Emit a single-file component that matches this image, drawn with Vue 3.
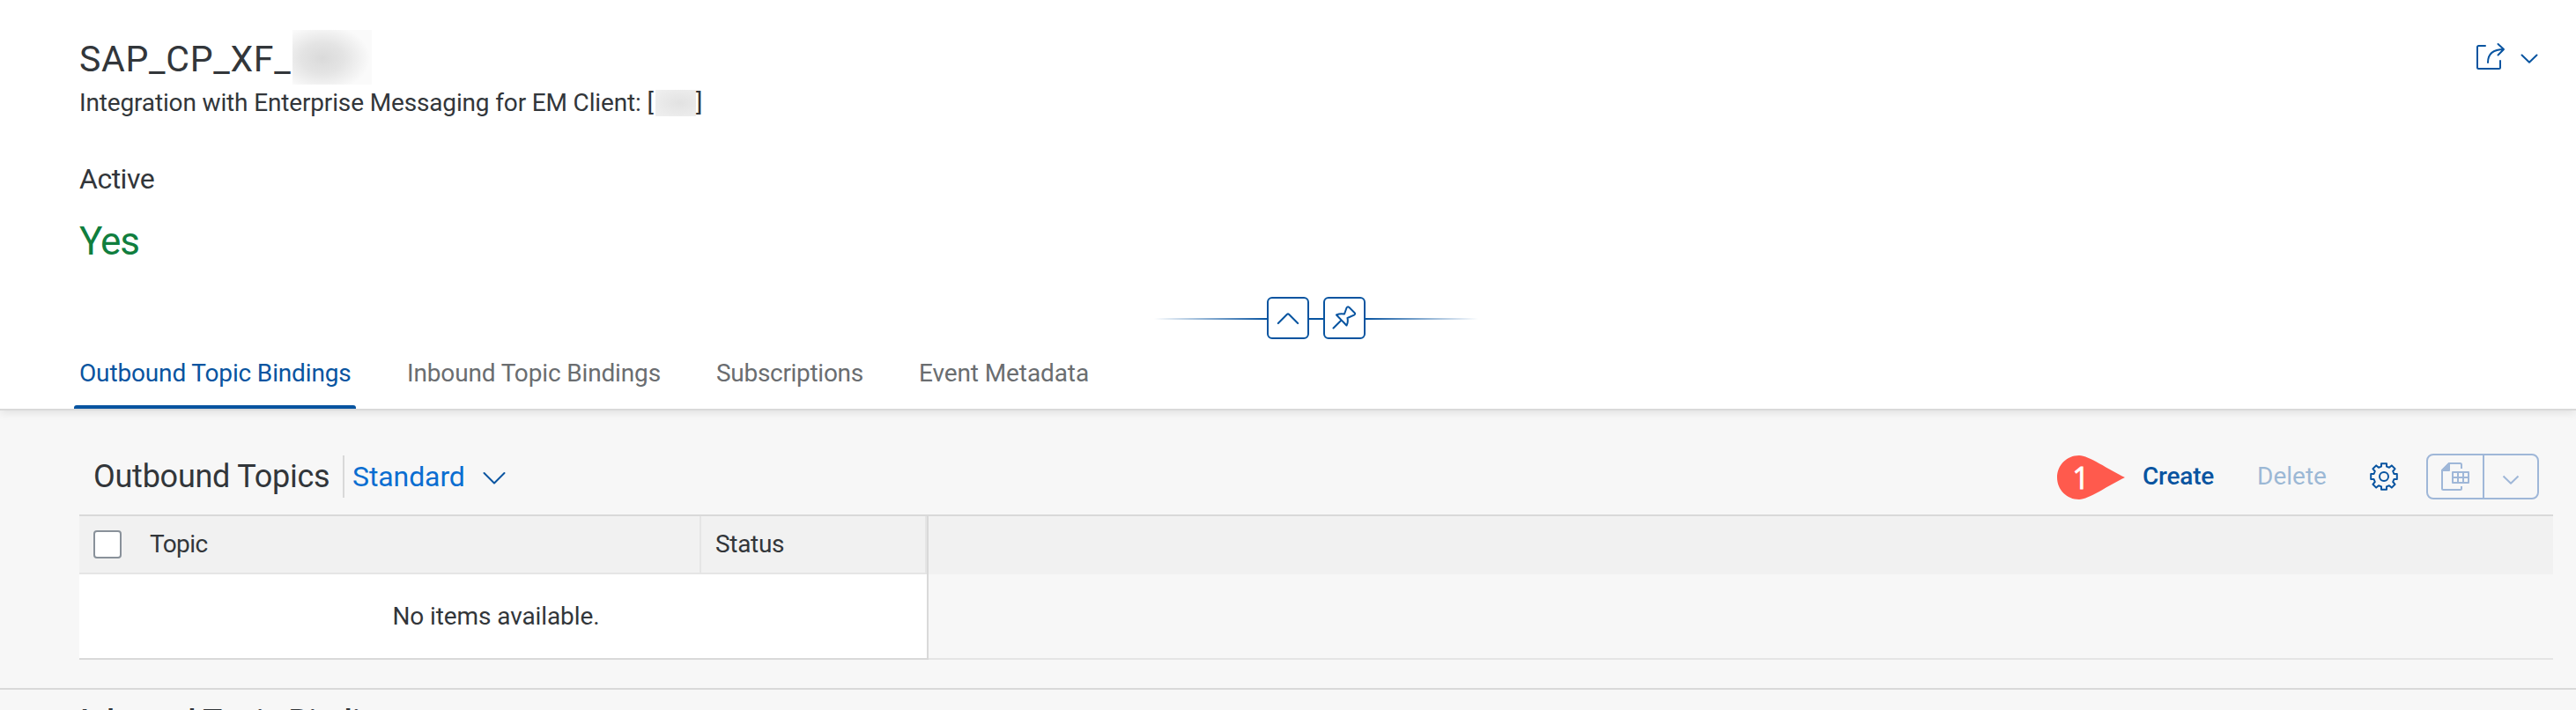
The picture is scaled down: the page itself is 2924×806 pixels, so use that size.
<script setup>
const tabs = [
  { label: 'Outbound Topic Bindings', cls: 'tab-outbound', active: true },
  { label: 'Inbound Topic Bindings', cls: 'tab-inbound' },
  { label: 'Subscriptions', cls: 'tab-subs' },
  { label: 'Event Metadata', cls: 'tab-meta' },
]
</script>

<template>
  <div class="page">
    <header class="head">
      <div class="head-top">
        <div class="titles">
          <h1 class="title"><span class="t-title">SAP_CP_XF_</span><span class="smudge-lg"></span></h1>
          <p class="subtitle"><span class="t-sub">Integration with Enterprise Messaging for EM Client: [</span><span class="smudge-sm"></span><span>]</span></p>
        </div>
        <div class="share">
          <svg class="share-icon" width="34" height="34" viewBox="0 0 34 34">
            <path d="M11 4H3.500Q2 4 2 5.500V28.500Q2 30 3.500 30H26.500Q28 30 28 28.500V21" />
            <path d="M14 23C14 13 20 8 32 8M25.500 2L32 8L25.500 14.500" />
          </svg>
          <svg class="share-arrow" width="20" height="12" viewBox="0 0 20 12"><path d="M1.500 1.500L10 9.800L18.500 1.500" /></svg>
        </div>
      </div>
      <div class="facet">
        <div class="facet-label">Active</div>
        <div class="facet-value">Yes</div>
      </div>
      <div class="anchor">
        <i class="line line-left"></i>
        <button class="sq">
          <svg width="44" height="44" viewBox="0 0 44 44"><path d="M10.800 28L21 17.800Q22 17 23 17.800L33.200 28" /></svg>
        </button>
        <i class="line line-mid"></i>
        <button class="sq">
          <svg width="44" height="44" viewBox="0 0 44 44"><path d="M9.500 33.500L18 25M13 18.500Q17 16.500 22 17.500L24.500 10.500Q25.500 8.500 27.500 10L33.500 16Q35 17.500 33 18.700L25.500 22Q26.500 27 24.500 30.500Z" /></svg>
        </button>
        <i class="line line-right"></i>
      </div>
      <nav class="tabs">
        <a v-for="t in tabs" :key="t.label" :class="['tab', t.cls, { active: t.active }]">{{ t.label }}</a>
      </nav>
    </header>

    <section class="section">
      <div class="toolbar">
        <h2 class="tb-title">Outbound Topics</h2>
        <i class="sep"></i>
        <span class="variant">Standard</span>
        <svg class="variant-arrow" width="26" height="16" viewBox="0 0 26 16"><path d="M1.500 2L13 13.500L24.500 2" /></svg>
        <span class="grow"></span>
        <span class="marker">
          <svg width="78" height="50" viewBox="0 0 78 50"><path d="M25 0C11 0 0 11 0 25S11 50 25 50C36 50 58 34 77 25C58 16 36 0 25 0Z" /></svg>
          <b>1</b>
        </span>
        <a class="btn create">Create</a>
        <a class="btn delete">Delete</a>
        <svg class="gear" width="32" height="32" viewBox="0 0 32 32">
          <path d="M13 1.200H19V4.600L22 5.800L24.800 3.400L28.600 7.200L26.200 10L27.400 13H30.800V19H27.400L26.200 22L28.600 24.800L24.800 28.600L22 26.200L19 27.400V30.800H13V27.400L10 26.200L7.200 28.600L3.400 24.800L5.800 22L4.600 19H1.200V13H4.600L5.800 10L3.400 7.200L7.200 3.400L10 5.800L13 4.600Z" />
          <circle cx="16" cy="16" r="5" />
        </svg>
        <div class="split">
          <span class="split-main">
            <svg width="32" height="32" viewBox="0 0 32 32">
              <path d="M23 7V2.500Q23 1 21.500 1H9L1 9V29.500Q1 31 2.500 31H21.500Q23 31 23 29.500V27" />
              <path class="fill" d="M9 1V9H1Z" />
              <path d="M13 11H31V23H13ZM13 17H31M19 11V23M25 11V23" />
            </svg>
          </span>
          <span class="split-menu">
            <svg width="20" height="12" viewBox="0 0 20 12"><path d="M1.500 1.500L10 9.800L18.500 1.500" /></svg>
          </span>
        </div>
      </div>

      <div class="table">
        <div class="thead">
          <div class="th th-topic"><i class="check"></i><span class="th-text">Topic</span></div>
          <div class="th th-status"><span class="th-text">Status</span></div>
          <div class="th-rest"></div>
        </div>
        <div class="tbody">
          <div class="empty">No items available.</div>
          <div class="rest"></div>
        </div>
      </div>
    </section>

    <section class="next"><h2>Inbound Topic Bindings</h2></section>
  </div>
</template>

<style>
body { margin: 0; }
</style>

<style scoped>
.page {
  width: 2924px; height: 806px; overflow: hidden;
  background: #f7f7f7; color: #32363a;
  font-family: Roboto, "Liberation Sans", sans-serif; font-size: 28px;
}
h1, h2, p { margin: 0; font-weight: 400; }
svg { display: block; fill: none; stroke: #0854a0; stroke-width: 2; stroke-linecap: round; stroke-linejoin: round; }
.head {
  height: 464px; background: #fff; border-bottom: 2px solid #d9d9d9;
  box-shadow: 0 2px 10px rgba(0,0,0,.1); position: relative;
  display: flex; flex-direction: column;
}
.head-top { display: flex; justify-content: space-between; height: 183px; padding: 0 42px 0 90px; }
.titles { padding-top: 43px; }
.title { display: flex; height: 56px; font-size: 40px; line-height: 48px; }
.t-title { width: 242px; font-size: 41px; letter-spacing: .7px; }
.subtitle { display: flex; line-height: 36px; white-space: nowrap; }
.t-sub { width: 654px; letter-spacing: -.15px; }
.smudge-lg { width: 90px; height: 62px; margin-top: -9px; background: radial-gradient(ellipse 54px 38px at 34px 32px, #dadada, #e4e4e4 45%, #f4f4f4 85%, #fafafa); }
.smudge-sm { width: 46px; height: 30px; margin-top: 3px; background: radial-gradient(ellipse at 60% 50%, #e2e2e2, #f0f0f0); }
.share { display: flex; padding-top: 48px; }
.share-arrow { margin: 13px 1px 0 17px; }
.facet { height: 154px; padding-left: 90px; }
.facet-label { font-size: 32px; line-height: 40px; height: 65px; letter-spacing: -.5px; }
.facet-value { font-size: 44px; line-height: 52px; color: #107e3e; letter-spacing: -1px; }
.anchor { display: flex; align-items: center; height: 48px; padding-left: 1310px; }
.line { height: 2px; margin-top: 2px; background: #0854a0; }
.line-left { width: 128px; background: linear-gradient(to right, transparent, #0854a0); }
.line-mid { width: 16px; }
.line-right { width: 128px; background: linear-gradient(to left, transparent, #0854a0); }
.sq { box-sizing: border-box; width: 48px; height: 48px; padding: 0; border: 2px solid #0854a0; border-radius: 6px; background: #fff; }
.tabs { display: flex; flex: 1; padding-left: 84px; }
.tab { position: relative; box-sizing: border-box; padding: 21px 6px 0; line-height: 36px; color: #6a6d70; white-space: nowrap; letter-spacing: -.15px; }
.tab.active { color: #0854a0; }
.tab.active::after { content: ""; position: absolute; left: 0; right: 0; bottom: 0; height: 4px; border-radius: 3px 3px 0 0; background: #0854a0; }
.tab-outbound { width: 320px; margin-right: 52px; }
.tab-inbound { width: 299px; margin-right: 52px; }
.tab-subs { width: 178px; margin-right: 52px; letter-spacing: -.3px; }
.tab-meta { letter-spacing: -.1px; }

.section { padding: 49px 26px 32px 90px; border-bottom: 2px solid #d9d9d9; }
.toolbar { display: flex; height: 52px; padding-bottom: 17px; padding-left: 16px; white-space: nowrap; }
.tb-title { width: 283px; font-size: 36px; line-height: 52px; letter-spacing: -.25px; }
.sep { width: 2px; height: 48px; margin-top: 2px; background: #d9d9d9; }
.variant { margin-left: 9px; width: 148px; font-size: 32px; line-height: 53px; color: #0a6ed1; letter-spacing: -.1px; }
.variant-arrow { margin-top: 20px; }
.grow { flex: 1; }
.marker { position: relative; width: 97px; padding-top: 2px; }
.marker svg { fill: #ff5a4d; stroke: none; }
.marker b { position: absolute; left: 0; top: 2px; width: 54px; text-align: center; font: 400 34px/51px "Open Sans", sans-serif; color: #fff; -webkit-text-stroke: .8px #fff; }
.btn { line-height: 51px; color: #0854a0; font-weight: 500; }
.create { width: 130px; letter-spacing: -.2px; }
.delete { width: 128px; font-weight: 400; opacity: .38; }
.gear { margin-top: 10px; }
.split { box-sizing: border-box; display: flex; width: 128px; height: 52px; margin: 0 16px 0 32px; border: 2px solid #9fb7d8; border-radius: 8px; }
.split svg { stroke: #9fb7d8; stroke-linecap: butt; }
.split .fill { fill: #9fb7d8; }
.split-main { width: 64px; padding: 8px 0 0 15px; box-sizing: border-box; border-right: 2px solid #9fb7d8; }
.split-menu { padding: 22px 0 0 20px; }

.table { border-top: 2px solid #d9d9d9; }
.thead { display: flex; height: 66px; background: #f1f1f1; }
.th { box-sizing: border-box; display: flex; align-items: center; border-right: 2px solid #e5e5e5; border-bottom: 2px solid #e5e5e5; }
.th-topic { width: 706px; padding-left: 16px; letter-spacing: -.6px; }
.th-status { width: 256px; padding-left: 16px; letter-spacing: -.3px; }
.th-text { padding-bottom: 2px; }
.th-rest { width: 2px; background: #d9d9d9; }
.check { box-sizing: border-box; width: 32px; height: 32px; margin-right: 32px; border: 2px solid #89919a; border-radius: 4px; background: #fff; }
.tbody { display: flex; height: 97px; }
.empty { box-sizing: border-box; width: 964px; padding-right: 16px; background: #fff; border-right: 2px solid #d9d9d9; border-bottom: 2px solid #d9d9d9; text-align: center; line-height: 96px; letter-spacing: -.1px; }
.rest { box-sizing: border-box; flex: 1; border-bottom: 2px solid #e5e5e5; }
.next { padding: 12px 91px 0; }
.next h2 { font-size: 36px; line-height: 48px; font-weight: 500; }
</style>
